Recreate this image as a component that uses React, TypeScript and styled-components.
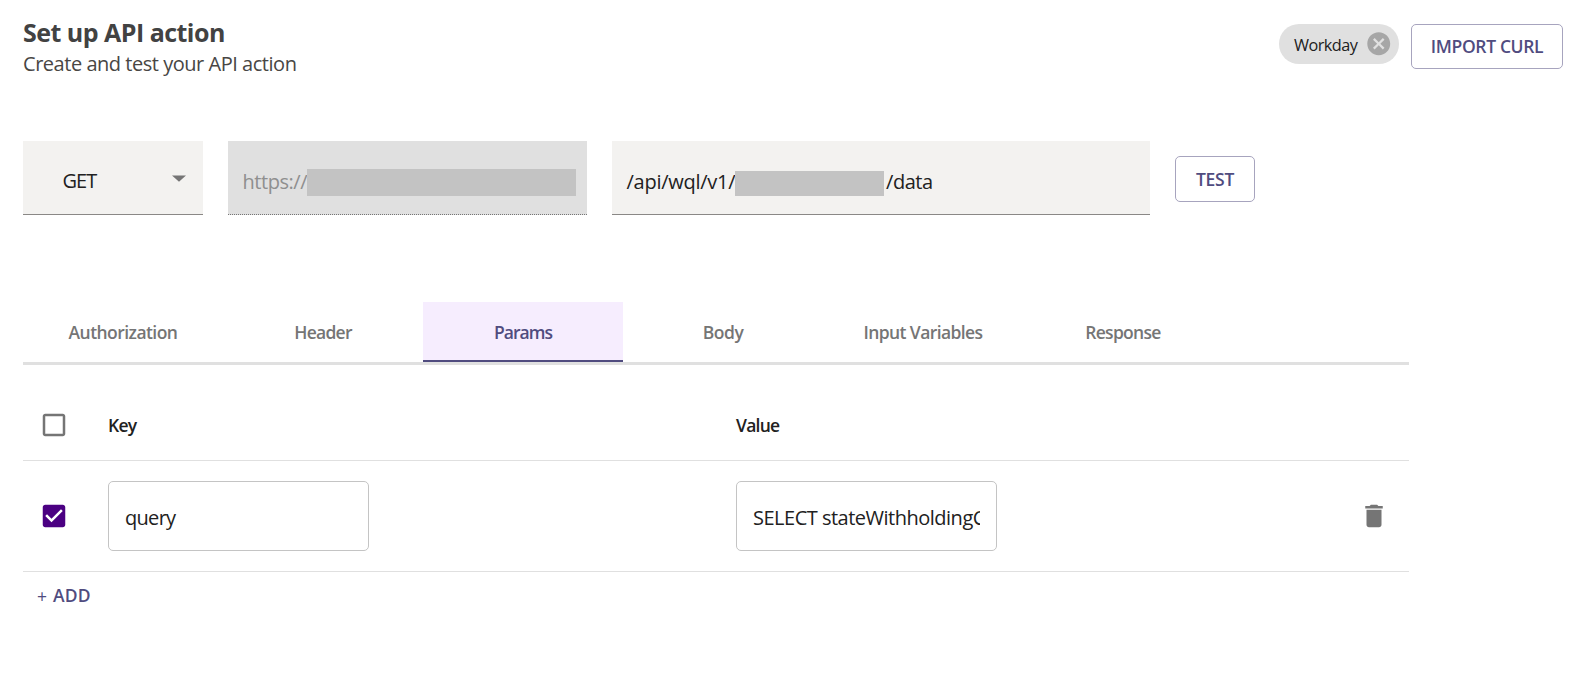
import React, { useState } from "react";
import styled, { createGlobalStyle } from "styled-components";

const GlobalStyle = createGlobalStyle`
  * { box-sizing: border-box; }
  body {
    margin: 0;
    background: #fff;
    color: #212121;
    font-family: "Segoe UI", "Open Sans", "Noto Sans", sans-serif;
    font-size: 20px;
    line-height: 28px;
  }
  button, input { font-family: inherit; }
`;

const Page = styled.main`
  padding: 16px 14px 0 23px;
  min-height: 681px;
`;

const Header = styled.header`
  display: flex;
  justify-content: space-between;
  height: 125px;
`;

const Title = styled.h1`
  margin: 0 0 2px;
  color: #424242;
  font-size: 25px;
  line-height: 32px;
  font-weight: 700;
  letter-spacing: -0.52px;
`;

const Subtitle = styled.p`
  margin: 0;
  color: #484644;
  letter-spacing: -0.47px;
`;

const HeaderActions = styled.div`
  display: flex;
  align-items: flex-start;
  gap: 12px;
  padding-top: 8px;
`;

const Chip = styled.div`
  display: flex;
  align-items: center;
  justify-content: space-between;
  width: 120px;
  height: 40px;
  padding: 0 7px 0 15px;
  border-radius: 20px;
  background: #e0e0e0;
  font-size: 16.25px;
  letter-spacing: -0.55px;
`;

const ChipLabel = styled.span`
  padding-top: 2px;
`;

const ChipClear = styled.svg`
  width: 27.5px;
  height: 27.5px;
  fill: #a6a6a6;
`;

const OutlinedButton = styled.button<{ $width: number; $height: number; $spacing: number }>`
  display: flex;
  justify-content: center;
  width: ${(p) => p.$width}px;
  height: ${(p) => p.$height}px;
  padding: ${(p) => p.$height - 37}px 0 0;
  border: 1px solid #a7a4be;
  border-radius: 5px;
  background: #fff;
  color: #504c7f;
  font-size: 17.5px;
  line-height: 27px;
  font-weight: 600;
  letter-spacing: ${(p) => p.$spacing}px;
`;

const RequestBar = styled.section`
  display: flex;
  align-items: flex-start;
  gap: 25px;
  height: 161px;
`;

const Field = styled.div<{ $width: number; $disabled?: boolean }>`
  display: flex;
  align-items: flex-start;
  width: ${(p) => p.$width}px;
  height: 74px;
  padding: 27px 10px 0 14.5px;
  border-bottom: 1px ${(p) => (p.$disabled ? "dotted #757575" : "solid #8a8886")};
  background: ${(p) => (p.$disabled ? "#e0e0e0" : "#f3f2f0")};
  color: ${(p) => (p.$disabled ? "#8f8f8f" : "#212121")};
  white-space: nowrap;
`;

const MethodField = styled(Field)`
  justify-content: space-between;
  padding: 26px 9px 0 39.5px;
  letter-spacing: -1px;
`;

const Caret = styled.svg`
  width: 30px;
  height: 30px;
  margin-top: -4px;
  fill: #757575;
`;

const FieldText = styled.span<{ $width?: number; $spacing: number }>`
  flex: none;
  width: ${(p) => (p.$width ? `${p.$width}px` : "auto")};
  letter-spacing: ${(p) => p.$spacing}px;
`;

const Redaction = styled.span<{ $width: number; $height: number; $top: number }>`
  flex: none;
  width: ${(p) => p.$width}px;
  height: ${(p) => p.$height}px;
  margin-top: ${(p) => p.$top}px;
  margin-right: 2px;
  background: #c3c3c3;
`;

const TestSlot = styled.div`
  padding-top: 15px;
`;

const Panel = styled.section`
  width: 1386px;
`;

const TabList = styled.nav`
  display: flex;
  height: 63px;
  border-bottom: 3px solid #e0e0e0;
`;

const Tab = styled.button<{ $active: boolean; $spacing: number }>`
  width: 200px;
  height: 60px;
  padding: 2px 0 0;
  border: 0;
  border-bottom: 2px solid ${(p) => (p.$active ? "#504c7f" : "transparent")};
  background: ${(p) => (p.$active ? "#f6edfe" : "transparent")};
  color: ${(p) => (p.$active ? "#504c7f" : "#757575")};
  font-size: 17.5px;
  line-height: 28px;
  font-weight: 600;
  letter-spacing: ${(p) => p.$spacing}px;
`;

const Row = styled.div<{ $height: number }>`
  display: grid;
  grid-template-columns: 85px 628px 1fr 70px;
  align-items: center;
  height: ${(p) => p.$height}px;
  border-bottom: 1px solid #e0e0e0;
`;

const HeadRow = styled(Row)`
  padding-top: 24px;
`;

const HeadCell = styled.span`
  padding-top: 1px;
  font-size: 17.5px;
  font-weight: 600;
  letter-spacing: -0.75px;
`;

const IconCell = styled.span<{ $inset: number; $color: string }>`
  display: flex;
  padding-left: ${(p) => p.$inset}px;
  color: ${(p) => p.$color};
  svg {
    width: 30px;
    height: 30px;
    fill: currentColor;
  }
`;

const TextInput = styled.input<{ $spacing: number }>`
  width: 261px;
  height: 70px;
  padding: 3px 16px 0;
  border: 1px solid #c4c4c4;
  border-radius: 5px;
  outline: 0;
  background: #fff;
  color: #212121;
  font-size: 20px;
  letter-spacing: ${(p) => p.$spacing}px;
`;

const AddButton = styled.button`
  display: flex;
  gap: 6px;
  margin: 9px 0 0 14px;
  padding: 0;
  border: 0;
  background: transparent;
  color: #504c7f;
  font-size: 17.5px;
  line-height: 28px;
  font-weight: 600;
  letter-spacing: 0.1px;
`;

const Plus = styled.span`
  font-weight: 400;
  padding-top: 1px;
`;

const TABS = [
  { name: "Authorization", spacing: -0.55 },
  { name: "Header", spacing: -0.75 },
  { name: "Params", spacing: -0.95 },
  { name: "Body", spacing: -0.45 },
  { name: "Input Variables", spacing: -0.6 },
  { name: "Response", spacing: -0.7 },
];

const CheckboxIcon = ({ checked }: { checked: boolean }) => (
  <svg viewBox="0 0 24 24">
    <path
      d={
        checked
          ? "M19 3H5c-1.11 0-2 .9-2 2v14c0 1.1.89 2 2 2h14c1.11 0 2-.9 2-2V5c0-1.1-.89-2-2-2zm-9 14l-5-5 1.41-1.41L10 14.17l7.59-7.59L19 8l-9 9z"
          : "M19 5v14H5V5h14m0-2H5c-1.1 0-2 .9-2 2v14c0 1.1.9 2 2 2h14c1.1 0 2-.9 2-2V5c0-1.1-.9-2-2-2z"
      }
    />
  </svg>
);

export default function App() {
  const [active, setActive] = useState("Params");
  const [key, setKey] = useState("query");
  const [value, setValue] = useState("SELECT stateWithholdingCode");

  return (
    <Page>
      <GlobalStyle />
      <Header>
        <div>
          <Title>Set up API action</Title>
          <Subtitle>Create and test your API action</Subtitle>
        </div>
        <HeaderActions>
          <Chip>
            <ChipLabel>Workday</ChipLabel>
            <ChipClear viewBox="0 0 24 24">
              <path d="M12 2C6.47 2 2 6.47 2 12s4.47 10 10 10 10-4.47 10-10S17.53 2 12 2zm5 13.59L15.59 17 12 13.41 8.41 17 7 15.59 10.59 12 7 8.41 8.41 7 12 10.59 15.59 7 17 8.41 13.41 12 17 15.59z" />
            </ChipClear>
          </Chip>
          <OutlinedButton $width={152} $height={45} $spacing={-0.35}>IMPORT CURL</OutlinedButton>
        </HeaderActions>
      </Header>

      <RequestBar>
        <MethodField $width={180}>
          GET
          <Caret viewBox="0 0 24 24"><path d="M6.4 10l5.6 5 5.6-5z" /></Caret>
        </MethodField>
        <Field $width={359} $disabled>
          <FieldText $width={64.5} $spacing={-0.45}>https://</FieldText>
          <Redaction $width={269} $height={27} $top={1} />
        </Field>
        <Field $width={538}>
          <FieldText $width={108.5} $spacing={-0.26}>/api/wql/v1/</FieldText>
          <Redaction $width={149} $height={25} $top={3} />
          <FieldText $spacing={-0.45}>/data</FieldText>
        </Field>
        <TestSlot>
          <OutlinedButton $width={80} $height={46} $spacing={-0.25}>TEST</OutlinedButton>
        </TestSlot>
      </RequestBar>

      <Panel>
        <TabList>
          {TABS.map(({ name, spacing }) => (
            <Tab key={name} $active={name === active} $spacing={spacing} onClick={() => setActive(name)}>
              {name}
            </Tab>
          ))}
        </TabList>
        <HeadRow $height={96}>
          <IconCell $inset={16} $color="#757575"><CheckboxIcon checked={false} /></IconCell>
          <HeadCell>Key</HeadCell>
          <HeadCell>Value</HeadCell>
        </HeadRow>
        <Row $height={111}>
          <IconCell $inset={16} $color="#4b0082"><CheckboxIcon checked /></IconCell>
          <TextInput $spacing={-0.7} value={key} onChange={(e) => setKey(e.target.value)} />
          <TextInput $spacing={-0.5} value={value} onChange={(e) => setValue(e.target.value)} />
          <IconCell $inset={20} $color="#757575">
            <svg viewBox="0 0 24 24">
              <path d="M6 19c0 1.1.9 2 2 2h8c1.1 0 2-.9 2-2V7H6v12zM19 4h-3.5l-1-1h-5l-1 1H5v2h14V4z" />
            </svg>
          </IconCell>
        </Row>
        <AddButton><Plus>+</Plus>ADD</AddButton>
      </Panel>
    </Page>
  );
}
